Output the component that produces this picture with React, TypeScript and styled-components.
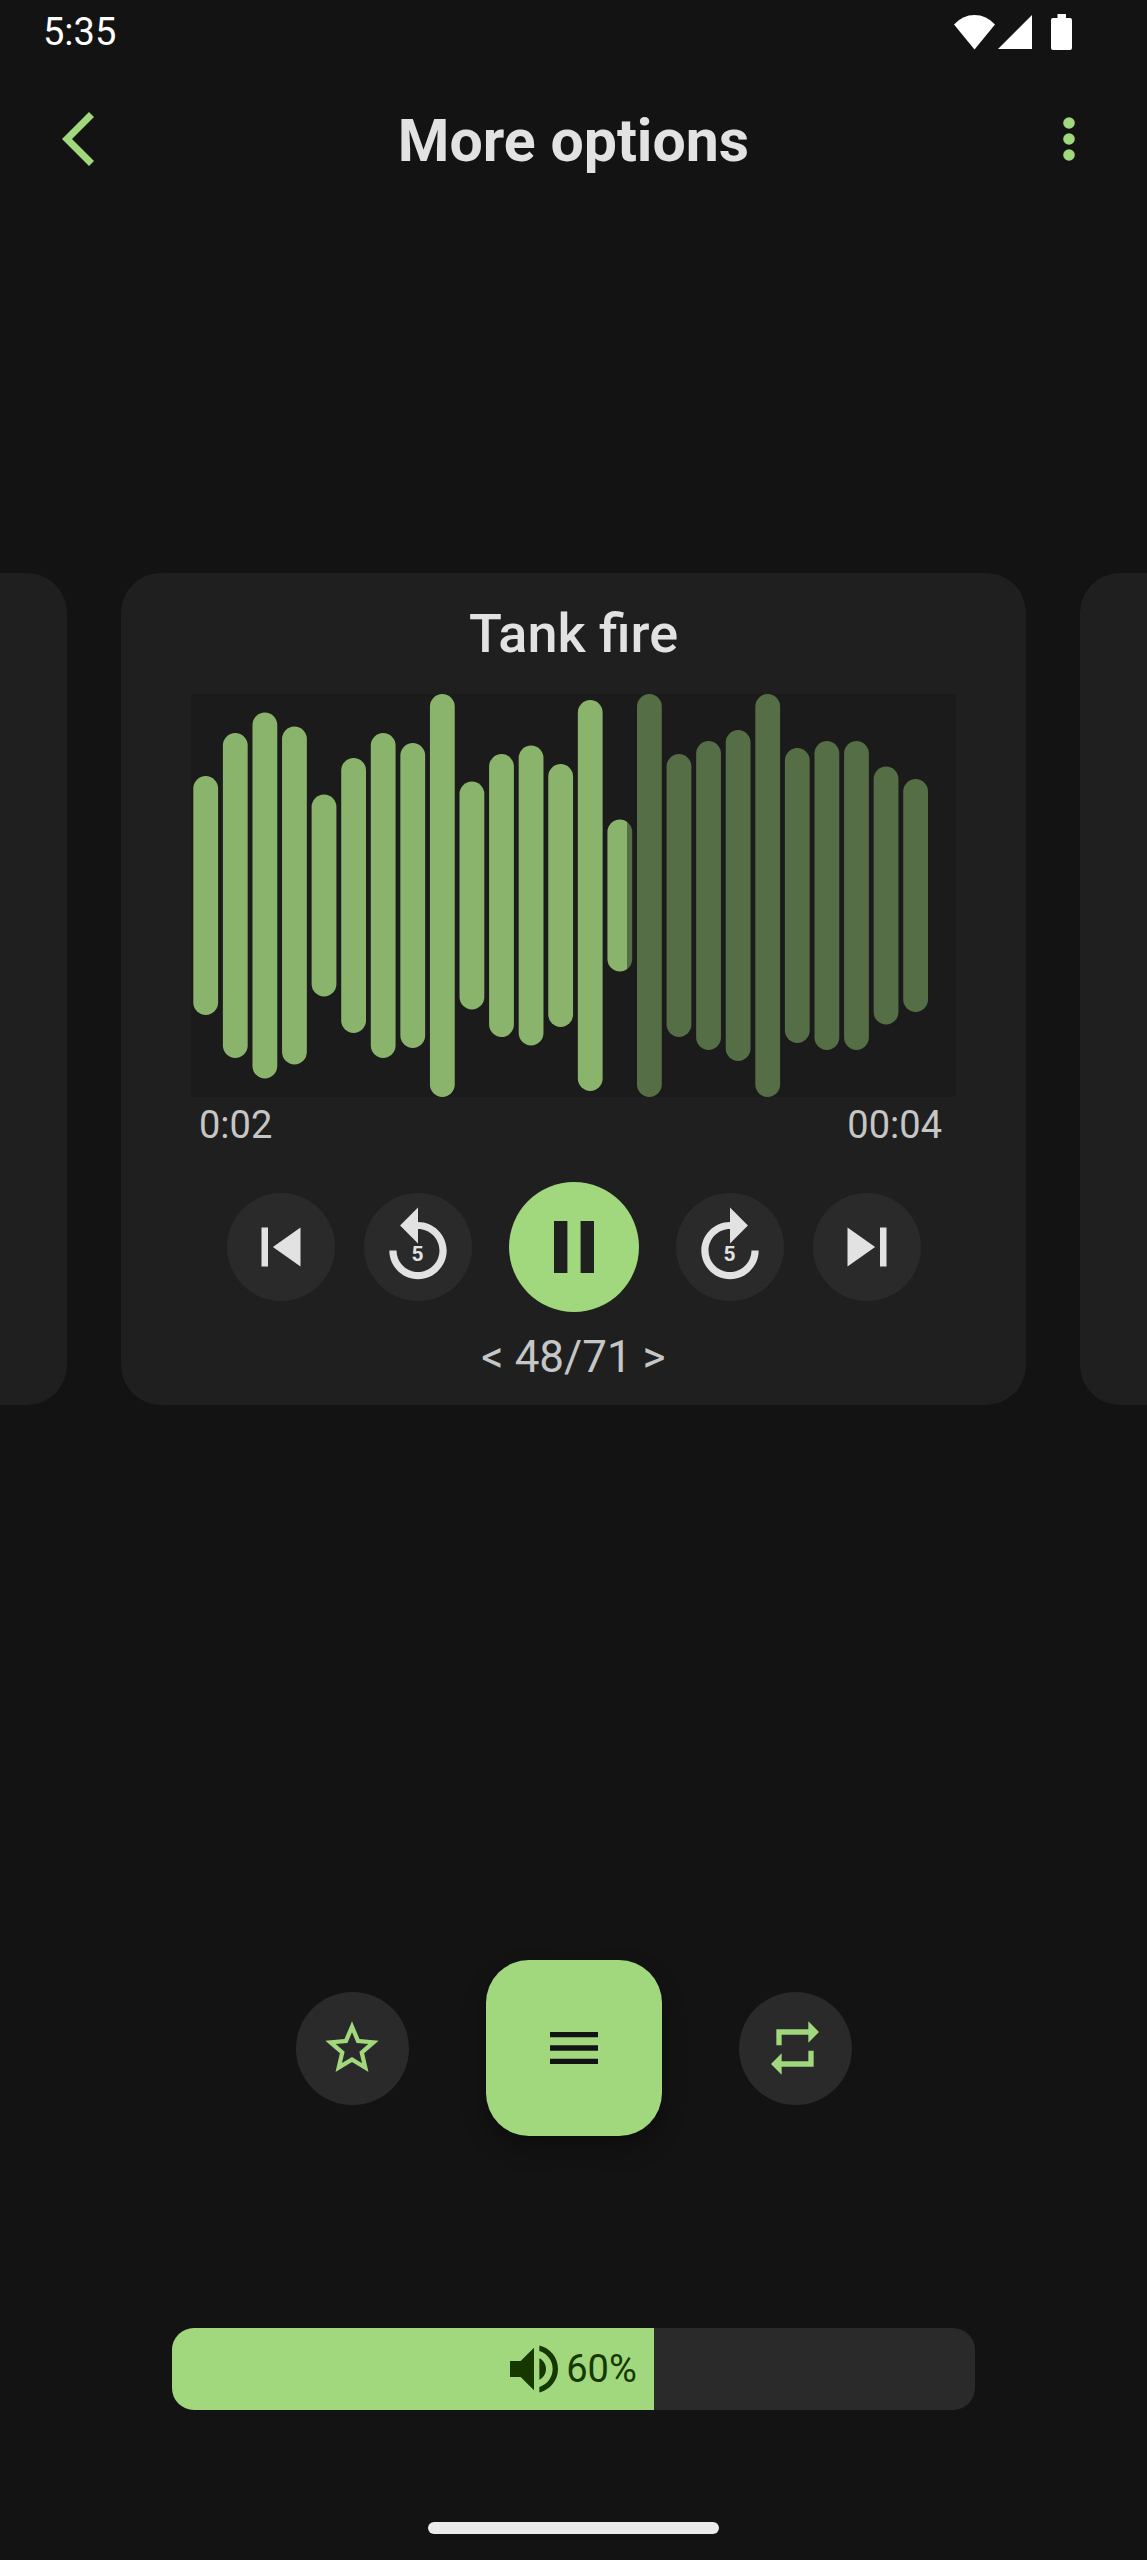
import React, { useState } from "react";
import styled, { createGlobalStyle } from "styled-components";

const color = {
  page: "#131313",
  card: "#1f1f1f",
  wave: "#1b1b1b",
  tonal: "#2a2a2a",
  accent: "#a1d77d",
  onAccent: "#163800",
  text: "#e2e2e2",
  muted: "#c6c6c6",
  played: "#8ab46b",
  unplayed: "#556e45",
};

const GlobalStyle = createGlobalStyle`
  * { box-sizing: border-box; }
  body {
    margin: 0;
    background: ${color.page};
    color: ${color.text};
    font-family: Roboto, "Liberation Sans", sans-serif;
  }
  button {
    padding: 0;
    border: 0;
    background: none;
    color: inherit;
    font: inherit;
    cursor: pointer;
  }
  svg { display: block; fill: currentColor; }
`;

const Screen = styled.div`
  display: flex;
  flex-direction: column;
  min-height: 100vh;
  overflow: hidden;
`;

const StatusBar = styled.div`
  display: flex;
  align-items: center;
  justify-content: space-between;
  height: 64px;
  padding: 0 75px 0 43px;
  color: #fff;
  font-size: 38px;
  line-height: 44px;
`;

const StatusIcons = styled.div`
  display: flex;
  align-items: center;
  gap: 3px;
`;

const BatteryIcon = styled.svg`
  margin-left: 16px;
`;

const AppBar = styled.header`
  display: grid;
  grid-template-columns: 112px 1fr 112px;
  align-items: center;
  height: 150px;
  padding: 0 22px;
`;

const PageTitle = styled.h1`
  margin: 0;
  padding-top: 4px;
  font-size: 59px;
  line-height: 70px;
  font-weight: 700;
  text-align: center;
`;

const BarButton = styled.button`
  display: grid;
  place-items: center;
  height: 112px;
  color: ${color.accent};
`;

const Main = styled.main`
  flex: 1;
  display: grid;
  grid-template-columns: minmax(0, 1fr);
  align-items: center;
`;

const Carousel = styled.div`
  display: flex;
  justify-content: center;
  gap: 54px;
`;

const Card = styled.section`
  flex: 0 0 calc(100% - 242px);
  display: flex;
  flex-direction: column;
  padding: 29px 70px 22px;
  border-radius: 40px;
  background: ${color.card};
`;

const SoundTitle = styled.h2`
  margin: 0 0 28px;
  font-size: 54px;
  line-height: 64px;
  font-weight: 500;
  text-align: center;
`;

const Wave = styled.svg`
  width: 100%;
  background: ${color.wave};
`;

const Times = styled.div`
  display: flex;
  justify-content: space-between;
  margin-top: 6px;
  padding: 0 14px 0 8px;
  color: ${color.muted};
  font-size: 38px;
  line-height: 44px;
`;

const Controls = styled.div`
  display: flex;
  align-items: center;
  justify-content: center;
  gap: 29px;
  margin-top: 35px;
`;

const RoundButton = styled.button<{ $size: number; $accent?: boolean }>`
  display: grid;
  place-items: center;
  width: ${(p) => p.$size}px;
  height: ${(p) => p.$size}px;
  border-radius: 50%;
  background: ${color.tonal};
  color: ${(p) => (p.$accent ? color.accent : color.text)};

  > * {
    grid-area: 1 / 1;
  }
`;

const PlayButton = styled.button`
  display: grid;
  place-items: center;
  width: 130px;
  height: 130px;
  margin: 0 8px;
  border-radius: 50%;
  background: ${color.accent};
  color: ${color.card};
`;

const SeekAmount = styled.span`
  padding-top: 14px;
  font-size: 21px;
  line-height: 24px;
  font-weight: 700;
`;

const Counter = styled.p`
  margin: 19px 0 0;
  color: ${color.muted};
  font-size: 44px;
  line-height: 52px;
  text-align: center;
`;

const Actions = styled.nav`
  display: flex;
  align-items: center;
  justify-content: center;
  gap: 77px;
  padding: 196px 0 192px;
`;

const MenuButton = styled.button`
  display: grid;
  place-items: center;
  width: 176px;
  height: 176px;
  border-radius: 43px;
  background: ${color.accent};
  color: ${color.page};
  box-shadow: 0 12px 24px rgba(0, 0, 0, 0.3);
`;

const Volume = styled.label`
  display: grid;
  width: 70%;
  height: 82px;
  margin: 0 auto;
  border-radius: 22px;
  overflow: hidden;

  > * {
    grid-area: 1 / 1;
  }
`;

const VolumeRange = styled.input`
  appearance: none;
  width: 100%;
  height: 100%;
  margin: 0;
  background: ${color.tonal};
  cursor: pointer;

  &::-webkit-slider-thumb {
    appearance: none;
    width: 1px;
    height: 82px;
    background: transparent;
  }
`;

const VolumeFill = styled.span`
  display: flex;
  align-items: center;
  justify-content: flex-end;
  padding-right: 17px;
  background: ${color.accent};
  color: ${color.onAccent};
  font-size: 38px;
  line-height: 44px;
  pointer-events: none;
`;

const HomeIndicator = styled.div`
  width: 291px;
  height: 12px;
  margin: 112px auto 26px;
  border-radius: 6px;
  background: #ebebeb;
`;

const barHeights = [
  239, 325, 366, 338, 202, 275, 325, 305, 403, 228, 283, 300, 263, 391, 152,
  403, 283, 309, 331, 403, 295, 309, 309, 258, 233,
];

const paths = {
  previous: "M6 6h2v12H6zm3.5 6 8.5 6V6z",
  next: "M6 18l8.5-6L6 6v12zM16 6v12h2V6h-2z",
  replay:
    "M12 5V1L7 6l5 5V7c3.31 0 6 2.69 6 6s-2.69 6-6 6-6-2.69-6-6H4c0 4.42 3.58 8 8 8s8-3.58 8-8-3.58-8-8-8z",
  forward:
    "M12 5V1l5 5-5 5V7c-3.31 0-6 2.69-6 6s2.69 6 6 6 6-2.69 6-6h2c0 4.42-3.58 8-8 8s-8-3.58-8-8 3.58-8 8-8z",
  star: "M22 9.24l-7.19-.62L12 2 9.19 8.63 2 9.24l5.46 4.73L5.82 21 12 17.27 18.18 21l-1.63-7.03L22 9.24zM12 15.4l-3.76 2.27 1-4.28-3.32-2.88 4.38-.38L12 6.1l1.71 4.04 4.38.38-3.32 2.88 1 4.28L12 15.4z",
  menu: "M3 18h18v-2H3v2zm0-5h18v-2H3v2zm0-7v2h18V6H3z",
  repeat:
    "M7 7h10v3l4-4-4-4v3H5v6h2V7zm10 10H7v-3l-4 4 4 4v-3h12v-6h-2v4z",
  volume:
    "M3 9v6h4l5 5V4L7 9H3zm13.5 3c0-1.77-1.02-3.29-2.5-4.03v8.05c1.48-.73 2.5-2.25 2.5-4.02zM14 3.23v2.06c2.89.86 5 3.54 5 6.71s-2.11 5.85-5 6.71v2.06c4.01-.91 7-4.49 7-8.77s-2.99-7.86-7-8.77z",
  play: "M8 5v14l11-7z",
};

function Icon({ name, size }: { name: keyof typeof paths; size: number }) {
  return (
    <svg width={size} height={size} viewBox="0 0 24 24" aria-hidden="true">
      <path d={paths[name]} />
    </svg>
  );
}

function Bars({ fill, clip }: { fill: string; clip: string }) {
  return (
    <g fill={fill} clipPath={`url(#${clip})`}>
      {barHeights.map((h, i) => (
        <rect
          key={i}
          x={2.3 + i * 29.58}
          y={(403 - h) / 2}
          width={24.8}
          height={h}
          rx={12.4}
        />
      ))}
    </g>
  );
}

function Waveform({ progress }: { progress: number }) {
  const split = 765 * progress;
  return (
    <Wave viewBox="0 0 765 403" role="img" aria-label="Sound wave">
      <clipPath id="played">
        <rect width={split} height="403" />
      </clipPath>
      <clipPath id="unplayed">
        <rect x={split} width={765 - split} height="403" />
      </clipPath>
      <Bars fill={color.played} clip="played" />
      <Bars fill={color.unplayed} clip="unplayed" />
    </Wave>
  );
}

export default function App() {
  const [volume, setVolume] = useState(60);
  const [playing, setPlaying] = useState(true);

  return (
    <Screen>
      <GlobalStyle />
      <StatusBar>
        <span>5:35</span>
        <StatusIcons>
          <svg width="41" height="35" viewBox="0 0 41 35" aria-hidden="true">
            <path d="M0 9.500Q8.500 0 20.500 0T41 9.500L20.500 34.500z" />
          </svg>
          <svg width="34" height="34" viewBox="0 0 34 34" aria-hidden="true">
            <path d="M34 0v34H0z" />
          </svg>
          <BatteryIcon width="21" height="36" viewBox="0 0 21 36" aria-hidden="true">
            <path d="M6.500 0h8.500v4h4a2 2 0 0 1 2 2v28a2 2 0 0 1-2 2H2a2 2 0 0 1-2-2V6a2 2 0 0 1 2-2h4.500z" />
          </BatteryIcon>
        </StatusIcons>
      </StatusBar>

      <AppBar>
        <BarButton aria-label="Back">
          <svg width="32" height="54" viewBox="0 0 32 54" aria-hidden="true">
            <path d="M27 0l5 5-22 22 22 22-5 5L0 27z" />
          </svg>
        </BarButton>
        <PageTitle>More options</PageTitle>
        <BarButton aria-label="Options menu">
          <svg width="12" height="44" viewBox="0 0 12 44" aria-hidden="true">
            <circle cx="6" cy="6" r="5.8" />
            <circle cx="6" cy="22" r="5.8" />
            <circle cx="6" cy="38" r="5.8" />
          </svg>
        </BarButton>
      </AppBar>

      <Main>
        <Carousel>
          <Card aria-hidden="true" />
          <Card>
            <SoundTitle>Tank fire</SoundTitle>
            <Waveform progress={0.57} />
            <Times>
              <span>0:02</span>
              <span>00:04</span>
            </Times>
            <Controls>
              <RoundButton $size={108} aria-label="Previous sound">
                <Icon name="previous" size={78} />
              </RoundButton>
              <RoundButton $size={108} aria-label="Back 5 seconds">
                <Icon name="replay" size={86} />
                <SeekAmount>5</SeekAmount>
              </RoundButton>
              <PlayButton
                aria-label={playing ? "Pause" : "Play"}
                onClick={() => setPlaying(!playing)}
              >
                {playing ? (
                  <svg width="40" height="52" viewBox="0 0 40 52" aria-hidden="true">
                    <path d="M0 0h13.400v52H0zM26.600 0H40v52H26.600z" />
                  </svg>
                ) : (
                  <Icon name="play" size={86} />
                )}
              </PlayButton>
              <RoundButton $size={108} aria-label="Forward 5 seconds">
                <Icon name="forward" size={86} />
                <SeekAmount>5</SeekAmount>
              </RoundButton>
              <RoundButton $size={108} aria-label="Next sound">
                <Icon name="next" size={78} />
              </RoundButton>
            </Controls>
            <Counter>&lt; 48/71 &gt;</Counter>
          </Card>
          <Card aria-hidden="true" />
        </Carousel>
      </Main>

      <Actions>
        <RoundButton $size={113} $accent aria-label="Favourite">
          <Icon name="star" size={64} />
        </RoundButton>
        <MenuButton aria-label="Sound list">
          <Icon name="menu" size={64} />
        </MenuButton>
        <RoundButton $size={113} $accent aria-label="Repeat">
          <Icon name="repeat" size={64} />
        </RoundButton>
      </Actions>

      <Volume>
        <VolumeRange
          type="range"
          min={0}
          max={100}
          value={volume}
          aria-label="Volume"
          onChange={(e) => setVolume(Number(e.target.value))}
        />
        <VolumeFill style={{ width: `${volume}%` }}>
          <Icon name="volume" size={64} />
          {volume}%
        </VolumeFill>
      </Volume>
      <HomeIndicator />
    </Screen>
  );
}
